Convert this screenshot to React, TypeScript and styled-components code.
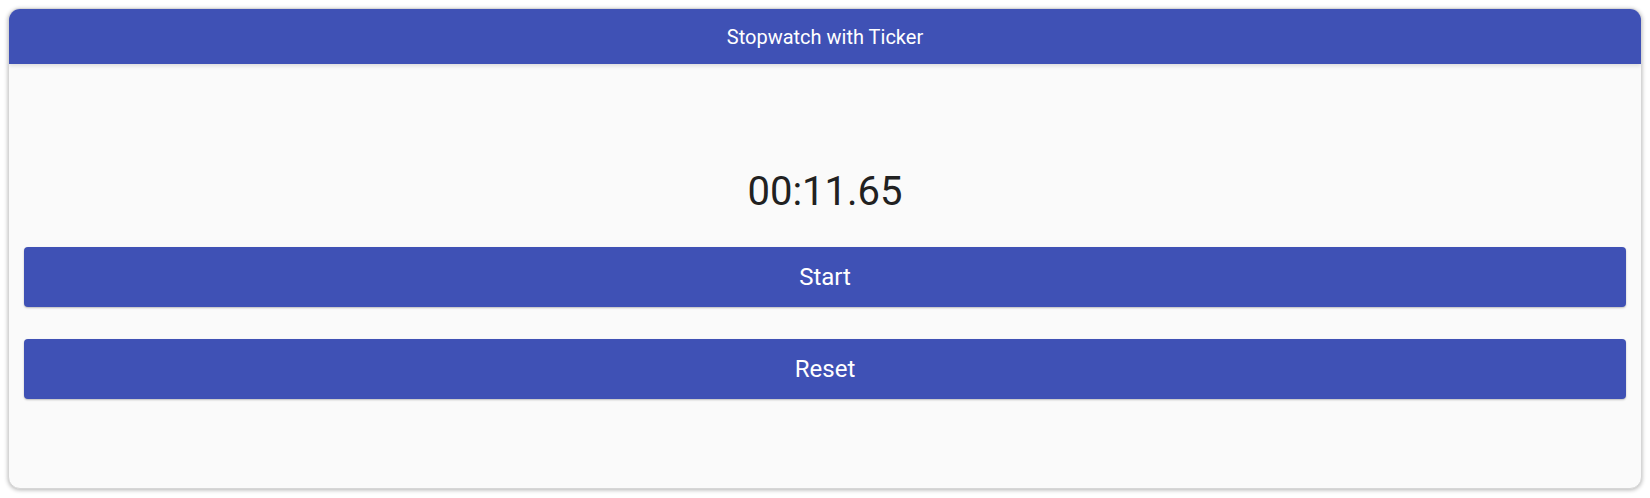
import React, { useState } from "react";
import styled, { createGlobalStyle } from "styled-components";

const GlobalStyle = createGlobalStyle`
  html, body {
    margin: 0;
    padding: 0;
    background: #ffffff;
  }
  body {
    padding: 8px;
    font-family: Roboto, "Noto Sans", "Liberation Sans", sans-serif;
  }
`;

const Card = styled.section`
  box-sizing: border-box;
  width: 100%;
  height: 481px;
  background: #fafafa;
  border: 1px solid #d6d6d6;
  border-radius: 12px;
  box-shadow: 0 1px 4px rgba(0, 0, 0, 0.3);
  overflow: hidden;
  display: flex;
  flex-direction: column;
`;

const Header = styled.header`
  height: 55px;
  flex: 0 0 55px;
  background: #3f51b5;
  color: #ffffff;
  display: flex;
  align-items: center;
  justify-content: center;
  font-size: 20px;
  font-weight: 400;
  box-shadow: 0 2px 4px rgba(0, 0, 0, 0.12);
  position: relative;
  z-index: 1;
`;

const Body = styled.div`
  flex: 1;
  display: flex;
  flex-direction: column;
  gap: 32px;
  padding: 104px 15px 90px;
`;

const Time = styled.div`
  text-align: center;
  font-size: 40px;
  line-height: 47px;
  color: #212121;
  font-weight: 400;
`;

const ActionButton = styled.button`
  height: 60px;
  width: 100%;
  border: none;
  border-radius: 4px;
  background: #3f51b5;
  color: #ffffff;
  font-family: Roboto, "Noto Sans", "Liberation Sans", sans-serif;
  font-size: 24px;
  font-weight: 400;
  cursor: pointer;
  box-shadow: 0 1px 2px rgba(0, 0, 0, 0.25);
  display: flex;
  align-items: center;
  justify-content: center;
`;

export default function App() {
  const [ms] = useState(11650);
  const secs = Math.floor(ms / 1000);
  const hund = Math.floor((ms % 1000) / 10);
  const mins = Math.floor(secs / 60);
  const text = `${String(mins).padStart(2, "0")}:${String(secs % 60).padStart(2, "0")}.${String(hund).padStart(2, "0")}`;
  return (
    <>
      <GlobalStyle />
      <Card>
        <Header>Stopwatch with Ticker</Header>
        <Body>
          <Time>{text}</Time>
          <ActionButton>Start</ActionButton>
          <ActionButton>Reset</ActionButton>
        </Body>
      </Card>
    </>
  );
}
